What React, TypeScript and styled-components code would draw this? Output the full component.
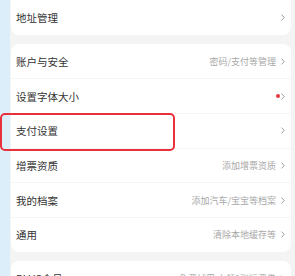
import React from 'react';
import styled, { createGlobalStyle } from 'styled-components';

const Global = createGlobalStyle`
  html, body { margin: 0; padding: 0; background: #f4f4f4; }
  body { font-family: "Noto Sans CJK SC", "Noto Sans", sans-serif; }
`;

const Screen = styled.div`
  position: relative;
  width: 295px;
  height: 276px;
  overflow: hidden;
  display: grid;
  grid-template-columns: 10px 1fr;
  background: #f4f4f4;
`;

const Strip = styled.div`
  background: #ddeefb;
`;

const Column = styled.div`
  display: flex;
  flex-direction: column;
  gap: 9px;
  padding: 0 4px 0 1px;
`;

const Card = styled.section<{ $top?: boolean }>`
  background: #fff;
  border-radius: ${(p) => (p.$top ? '0 0 8px 8px' : '8px')};
  overflow: hidden;
`;

const Row = styled.div`
  box-sizing: border-box;
  height: 34.7px;
  display: flex;
  align-items: center;
  padding: 0 6px 0 5px;
  & + & { border-top: 1px solid #f5f5f5; }
`;

const Label = styled.span`
  flex: 1;
  font-size: 10.5px;
  color: #333;
`;

const Hint = styled.span`
  font-size: 9px;
  color: #a8a8a8;
  margin-right: 5px;
`;

const Dot = styled.span`
  width: 4px;
  height: 4px;
  border-radius: 50%;
  background: #e4393c;
  margin-right: 1px;
`;

const Chevron = () => (
  <svg width="4" height="7" viewBox="0 0 4 7">
    <path d="M0.6 0.6 L3.2 3.5 L0.6 6.4" fill="none" stroke="#8e8e8e" strokeWidth="0.9" />
  </svg>
);

const Highlight = styled.div`
  position: absolute;
  left: 0;
  top: 113px;
  width: 175px;
  height: 38px;
  box-sizing: border-box;
  border: 2.5px solid #e8313b;
  border-radius: 5px;
`;

type Item = { label: string; hint?: string; dot?: boolean };

const Item = ({ label, hint, dot }: Item) => (
  <Row>
    <Label>{label}</Label>
    {hint && <Hint>{hint}</Hint>}
    {dot && <Dot />}
    <Chevron />
  </Row>
);

const settings: Item[] = [
  { label: '账户与安全', hint: '密码/支付等管理' },
  { label: '设置字体大小', dot: true },
  { label: '支付设置' },
  { label: '增票资质', hint: '添加增票资质' },
  { label: '我的档案', hint: '添加汽车/宝宝等档案' },
  { label: '通用', hint: '清除本地缓存等' },
];

export default function App() {
  return (
    <Screen>
      <Global />
      <Strip />
      <Column>
        <Card $top>
          <Item label="地址管理" />
        </Card>
        <Card>
          {settings.map((s) => (
            <Item key={s.label} {...s} />
          ))}
        </Card>
        <Card>
          <Item label="PLUS会员" hint="免费试用 立领1张运费券" />
        </Card>
      </Column>
      <Highlight />
    </Screen>
  );
}
